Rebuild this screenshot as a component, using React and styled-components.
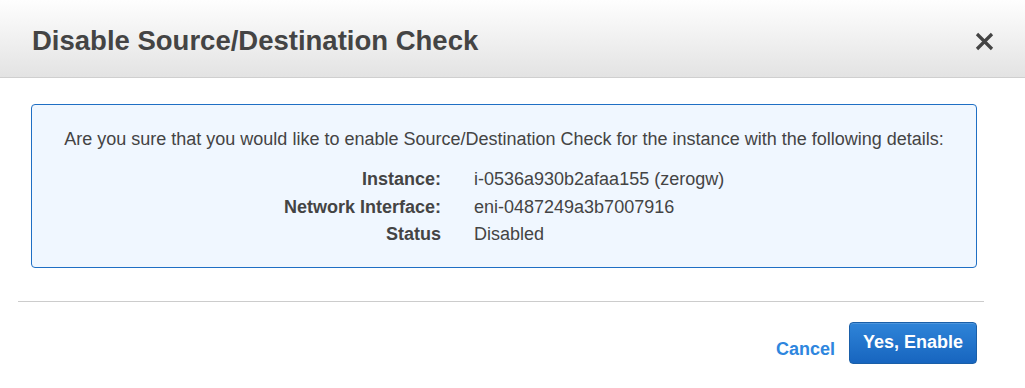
import styled, { createGlobalStyle } from 'styled-components';

const GlobalStyle = createGlobalStyle`
  html, body {
    margin: 0;
    padding: 0;
    background: #fff;
    font-family: "Liberation Sans", Arial, sans-serif;
  }
`;

const Modal = styled.div`
  width: 1025px;
  height: 388px;
  background: #fff;
  color: #444;
`;

const Header = styled.div`
  height: 72px;
  display: flex;
  align-items: center;
  justify-content: space-between;
  padding: 5px 31px 0 32px;
  background: linear-gradient(to bottom, #fefefe, #e3e3e3);
  border-bottom: 1px solid #cfcfcf;
`;

const Title = styled.h2`
  margin: 0;
  font-size: 27.5px;
  font-weight: bold;
  color: #444;
`;

const CloseButton = styled.button`
  border: 0;
  background: none;
  padding: 0;
  display: flex;
  color: #444;
  cursor: pointer;
`;

const Body = styled.div`
  padding: 26px 48px 33px 31px;
`;

const InfoBox = styled.div`
  border: 1px solid #1f6fc4;
  border-radius: 4px;
  background: #f0f7ff;
  padding: 24px 20px 22px;
  text-align: center;
  font-size: 18px;
`;

const Question = styled.p`
  margin: 0 0 19px;
`;

const Details = styled.div`
  display: grid;
  grid-template-columns: 389px 1fr;
  column-gap: 33px;
  row-gap: 6.6px;
  text-align: left;
`;

const Label = styled.div`
  font-weight: bold;
  text-align: right;
`;

const Value = styled.div``;

const Divider = styled.hr`
  margin: 0 41px 0 18px;
  border: 0;
  border-top: 1px solid #ccc;
`;

const Footer = styled.div`
  display: flex;
  justify-content: flex-end;
  align-items: center;
  gap: 14px;
  padding: 20px 48px 0 0;
`;

const CancelLink = styled.a`
  color: #2e86de;
  font-weight: bold;
  font-size: 18px;
  margin-top: 13px;
  text-decoration: none;
`;

const PrimaryButton = styled.button`
  height: 42px;
  padding: 0 13px 3px;
  border: 1px solid #1a5fa8;
  border-radius: 4px;
  background: linear-gradient(to bottom, #2f84d8, #1765bf);
  color: #fff;
  font-family: inherit;
  font-weight: bold;
  font-size: 18px;
  line-height: 1;
  box-shadow: inset 0 1px 0 rgba(255, 255, 255, 0.15);
`;

const details = [
  ['Instance:', 'i-0536a930b2afaa155 (zerogw)'],
  ['Network Interface:', 'eni-0487249a3b7007916'],
  ['Status', 'Disabled'],
];

export default function App() {
  return (
    <>
      <GlobalStyle />
      <Modal>
        <Header>
          <Title>Disable Source/Destination Check</Title>
          <CloseButton aria-label="Close">
            <svg width="19" height="19" viewBox="0 0 19 19">
              <path d="M2 2 L17 17 M17 2 L2 17" stroke="#444" strokeWidth="3.2" />
            </svg>
          </CloseButton>
        </Header>
        <Body>
          <InfoBox>
            <Question>
              Are you sure that you would like to enable Source/Destination Check for the instance with the following details:
            </Question>
            <Details>
              {details.flatMap(([label, value]) => [
                <Label key={label}>{label}</Label>,
                <Value key={value}>{value}</Value>,
              ])}
            </Details>
          </InfoBox>
        </Body>
        <Divider />
        <Footer>
          <CancelLink href="#">Cancel</CancelLink>
          <PrimaryButton>Yes, Enable</PrimaryButton>
        </Footer>
      </Modal>
    </>
  );
}
